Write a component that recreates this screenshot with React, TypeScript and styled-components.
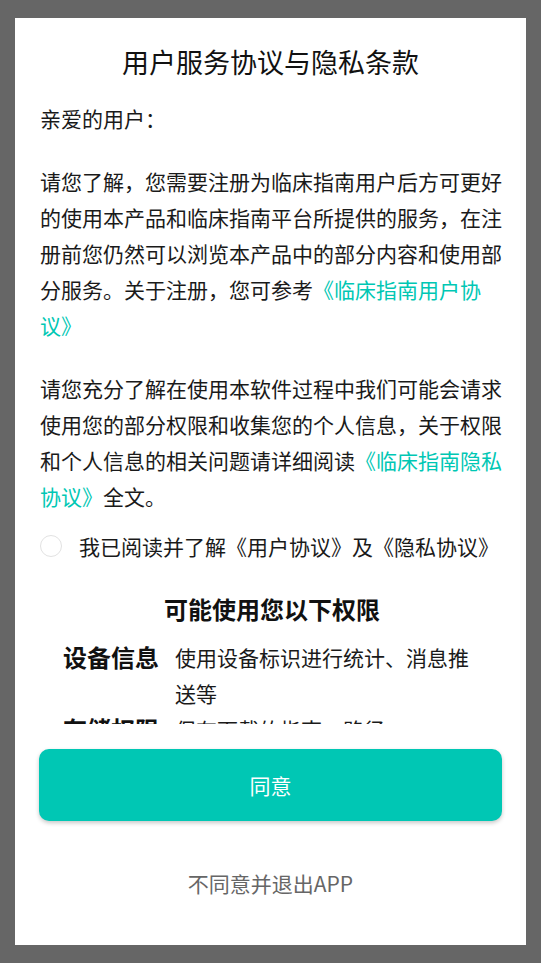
import React, { useState } from "react";
import styled, { createGlobalStyle } from "styled-components";

const GlobalStyle = createGlobalStyle`
  html, body {
    margin: 0;
    padding: 0;
    height: 100%;
    background: #666666;
  }
  body {
    font-family: "Noto Sans CJK SC", "Noto Sans", sans-serif;
  }
  #root {
    height: 100%;
  }
`;

const TEAL = "#00c7b4";

const permissions = [
  { name: "设备信息", desc: "使用设备标识进行统计、消息推送等" },
  { name: "存储权限", desc: "保存下载的指南、路径" },
];

const App = () => {
  const [checked, setChecked] = useState(false);

  return (
    <>
      <GlobalStyle />
      <Page>
        <Card>
          <Title>用户服务协议与隐私条款</Title>
          <Scroll>
            <Paragraph>亲爱的用户：</Paragraph>
            <Paragraph>
              请您了解，您需要注册为临床指南用户后方可更好的使用本产品和临床指南平台所提供的服务，在注册前您仍然可以浏览本产品中的部分内容和使用部分服务。关于注册，您可参考
              <Link>《临床指南用户协议》</Link>
            </Paragraph>
            <Paragraph>
              请您充分了解在使用本软件过程中我们可能会请求使用您的部分权限和收集您的个人信息，关于权限和个人信息的相关问题请详细阅读
              <Link>《临床指南隐私协议》</Link>全文。
            </Paragraph>
            <CheckRow onClick={() => setChecked(!checked)}>
              <Circle checked={checked} />
              <CheckText>我已阅读并了解《用户协议》及《隐私协议》</CheckText>
            </CheckRow>
            <SectionTitle>可能使用您以下权限</SectionTitle>
            <PermissionList>
              {permissions.map(p => (
                <PermissionRow key={p.name}>
                  <PermissionName>{p.name}</PermissionName>
                  <PermissionDesc>{p.desc}</PermissionDesc>
                </PermissionRow>
              ))}
            </PermissionList>
          </Scroll>
          <Footer>
            <AgreeButton>同意</AgreeButton>
            <ExitLink>不同意并退出APP</ExitLink>
          </Footer>
        </Card>
      </Page>
    </>
  );
};

export default App;

const Page = styled.div`
  height: 100%;
  box-sizing: border-box;
  padding: 18px 15px;
  display: flex;
`;

const Card = styled.div`
  flex: 1;
  background: #ffffff;
  display: flex;
  flex-direction: column;
  min-height: 0;
`;

const Title = styled.h1`
  margin: 24px 0 0;
  font-size: 27px;
  line-height: 40px;
  font-weight: 400;
  color: #111;
  text-align: center;
`;

const Scroll = styled.div`
  flex: 1;
  min-height: 0;
  overflow: hidden;
  padding: 0 22px 0 25px;
  color: #1a1a1a;
  font-size: 21px;
  line-height: 36px;
`;

const Paragraph = styled.p`
  margin: 27px 0 0;
  &:first-child {
    margin-top: 18px;
  }
`;

const Link = styled.span`
  color: ${TEAL};
`;

const CheckRow = styled.div`
  margin-top: 14px;
  display: flex;
  align-items: center;
  gap: 17px;
  cursor: pointer;
`;

const Circle = styled.span<{ checked: boolean }>`
  width: 22px;
  height: 22px;
  box-sizing: border-box;
  border-radius: 50%;
  border: 1.5px solid ${props => (props.checked ? TEAL : "#e2e2e2")};
  background: ${props => (props.checked ? TEAL : "transparent")};
  flex-shrink: 0;
`;

const CheckText = styled.span`
  font-size: 21px;
  white-space: nowrap;
`;

const SectionTitle = styled.h2`
  margin: 27px 0 0;
  font-size: 24px;
  line-height: 36px;
  font-weight: 700;
  text-align: center;
  color: #111;
`;

const PermissionList = styled.div`
  margin-top: 12px;
  padding: 0 24px 0 23px;
`;

const PermissionRow = styled.div`
  display: flex;
  gap: 16px;
  align-items: flex-start;
`;

const PermissionName = styled.div`
  font-size: 24px;
  font-weight: 700;
  color: #111;
  white-space: nowrap;
`;

const PermissionDesc = styled.div`
  flex: 1;
  font-size: 21px;
`;

const Footer = styled.div`
  padding: 25px 24px 42px;
  display: flex;
  flex-direction: column;
`;

const AgreeButton = styled.button`
  height: 72px;
  border: 0;
  border-radius: 10px;
  background: ${TEAL};
  color: #ffffff;
  font-family: inherit;
  font-size: 21px;
  box-shadow: 0 2px 4px rgba(0, 0, 0, 0.22);
  cursor: pointer;
`;

const ExitLink = styled.div`
  margin-top: 42px;
  line-height: 40px;
  font-size: 21px;
  color: #666666;
  text-align: center;
  cursor: pointer;
`;
